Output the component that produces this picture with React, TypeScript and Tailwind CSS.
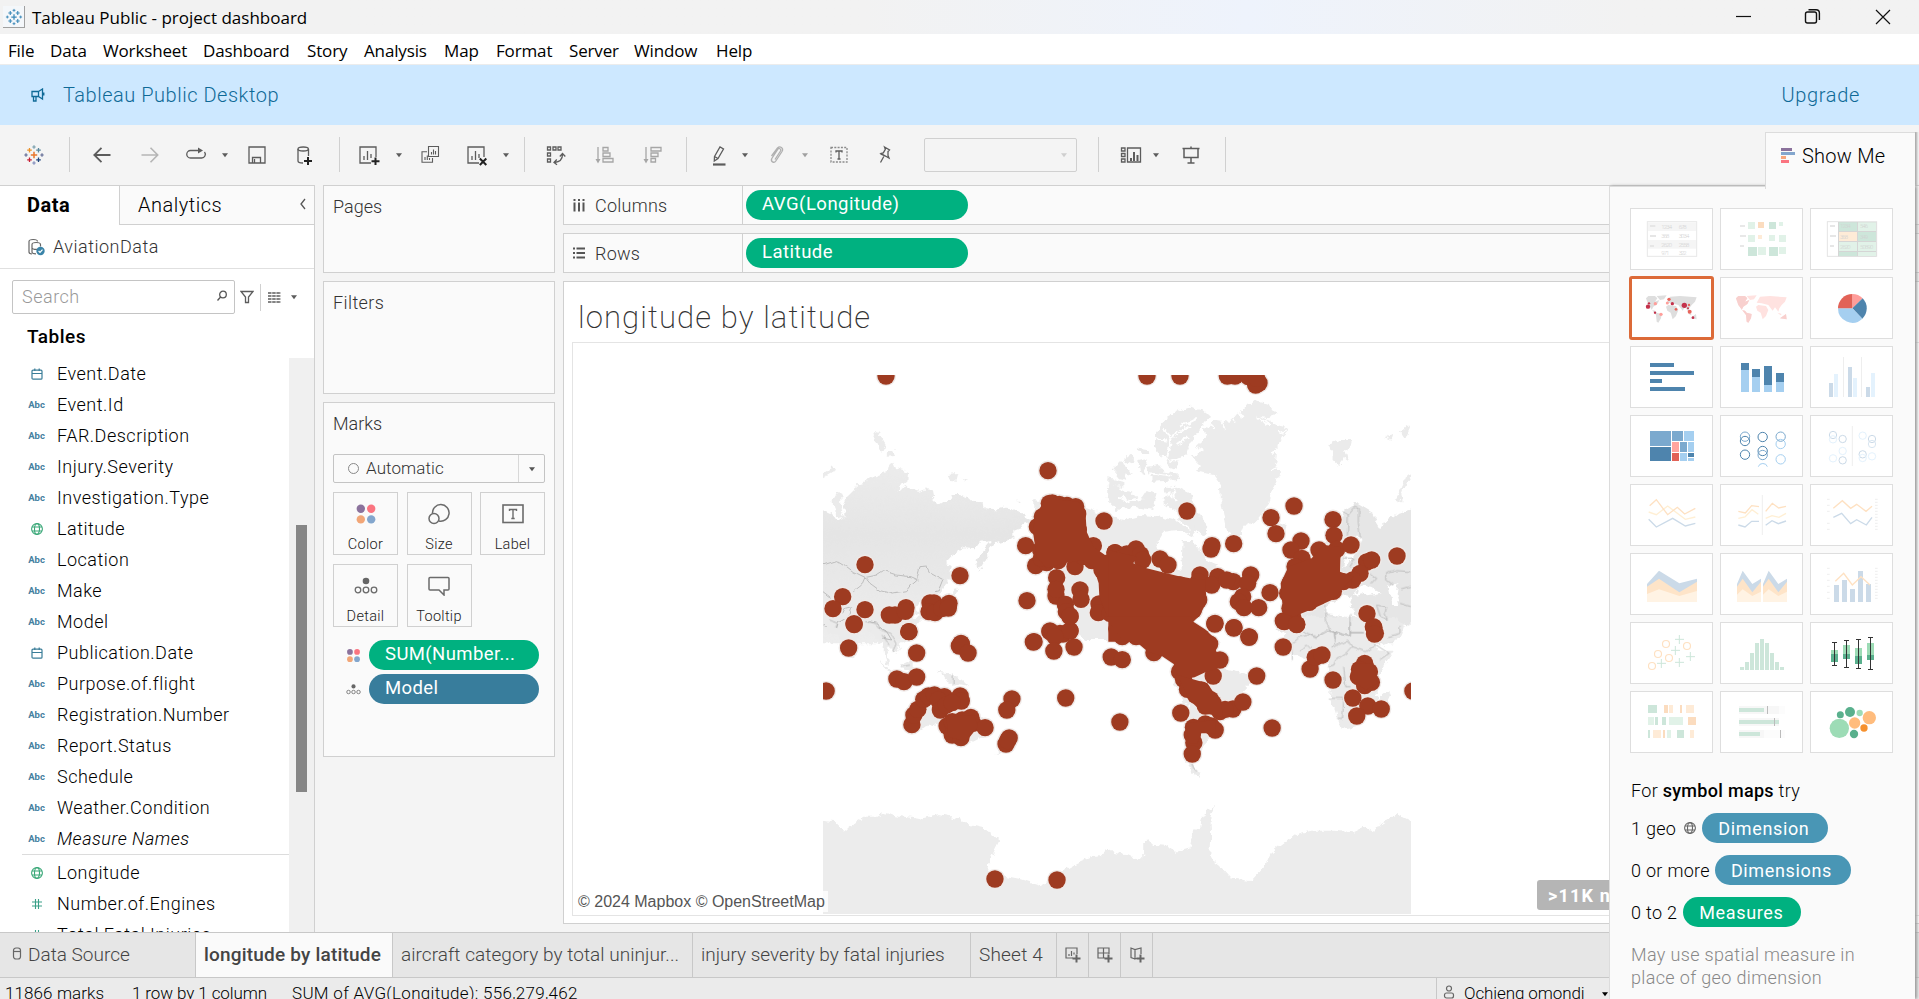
import React from "react";

const UI = "font-['Roboto','Liberation_Sans',sans-serif]";

/* ---------- small shared pieces ---------- */

function Ico({ children, className = "", size = 24 }: { children: React.ReactNode; className?: string; size?: number }) {
  return (
    <svg width={size} height={size} viewBox="0 0 24 24" fill="none" stroke="currentColor" strokeWidth="1.3" className={`shrink-0 ${className}`}>
      {children}
    </svg>
  );
}

function Caret({ className = "" }: { className?: string }) {
  return (
    <svg width="8" height="8" viewBox="0 0 8 8" className={`shrink-0 fill-current ${className}`}>
      <path d="M1 2.300h6L4 6.200z" />
    </svg>
  );
}

function Divider({ className = "" }: { className?: string }) {
  return <div className={`h-[35px] w-px shrink-0 bg-[#d0d0d0] ${className}`} />;
}

function TableauLogo({ mono = false, className = "", size = 24 }: { mono?: boolean; className?: string; size?: number }) {
  const plus = (x: number, y: number, r: number, c: string, w: number) => (
    <path key={`${x}-${y}`} d={`M${x - r} ${y}h${2 * r}M${x} ${y - r}v${2 * r}`} stroke={mono ? "#3a88b8" : c} strokeWidth={w} />
  );
  return (
    <Ico className={className} size={size}>
      {plus(12, 12, 3.2, "#e8762c", 1.5)}
      {plus(7.5, 7.2, 2.3, "#eb9129", 1.3)}
      {plus(16.5, 7.2, 2.3, "#59879b", 1.3)}
      {plus(7.5, 16.8, 2.3, "#c72035", 1.3)}
      {plus(16.5, 16.8, 2.3, "#1f457e", 1.3)}
      {plus(12, 4, 1.7, "#7199a6", 1.1)}
      {plus(12, 20, 1.7, "#7b86b8", 1.1)}
      {plus(4, 12, 1.7, "#5b6591", 1.1)}
      {plus(20, 12, 1.7, "#5b6591", 1.1)}
    </Ico>
  );
}

function Globe({ className = "", size = 14 }: { className?: string; size?: number }) {
  return (
    <svg width={size} height={size} viewBox="0 0 14 14" fill="none" stroke="currentColor" strokeWidth="1.1" className={`shrink-0 ${className}`}>
      <circle cx="7" cy="7" r="5.4" />
      <ellipse cx="7" cy="7" rx="2.5" ry="5.4" />
      <path d="M2 5h10M2 9h10" />
    </svg>
  );
}

function ColorDots({ className = "", size = 22 }: { className?: string; size?: number }) {
  return (
    <svg width={size} height={size} viewBox="0 0 22 22" className={`shrink-0 ${className}`}>
      <circle cx="5.8" cy="5.800" r="4.2" fill="#8b729c" />
      <circle cx="16.2" cy="5.800" r="4.2" fill="#fa7480" />
      <circle cx="5.8" cy="16.400" r="4.2" fill="#f2a677" />
      <circle cx="16.2" cy="16.400" r="4.2" fill="#83a6cd" />
    </svg>
  );
}

function DetailDots({ className = "", size = 24 }: { className?: string; size?: number }) {
  return (
    <svg width={size} height={size} viewBox="0 0 24 24" fill="none" stroke="#6b6b6b" strokeWidth="1.3" className={`shrink-0 ${className}`}>
      <circle cx="12" cy="7" r="3.3" fill="#666" stroke="none" />
      <circle cx="4" cy="16" r="2.8" />
      <circle cx="12" cy="16" r="2.8" />
      <circle cx="20" cy="16" r="2.8" />
    </svg>
  );
}

/* ---------- window chrome ---------- */

function TitleBar() {
  return (
    <div className="flex h-[34px] items-center bg-linear-to-r from-[#f2f2f2] from-45% via-[#eef3fc] via-65% to-[#f2f2f2] to-85% pl-[3px]">
      <div className="flex h-[22px] w-[22px] items-center justify-center border-r border-b border-[#a0a0a0] bg-[#f4f7fa]">
        <TableauLogo mono size={20} />
      </div>
      <div className="mt-[1px] ml-[7px] font-['Open_Sans','Noto_Sans',sans-serif] text-[17px] text-black">Tableau Public - project dashboard</div>
      <svg width="160" height="20" viewBox="0 0 160 20" fill="none" stroke="#111" strokeWidth="1.4" className="mr-[28px] ml-auto">
        <path d="M5 9.5h15" strokeWidth="1.2" />
        <rect x="74.5" y="5" width="11" height="11" rx="2" />
        <path d="M77.5 2.7h7.5a3.4 3.4 0 0 1 3.4 3.4v7" />
        <path d="M145 3l14 14M159 3l-14 14" strokeWidth="1.2" />
      </svg>
    </div>
  );
}

const MENU: [string, string][] = [
  ["File", "w-[42px]"], ["Data", "w-[53px]"], ["Worksheet", "w-[100px]"], ["Dashboard", "w-[104px]"], ["Story", "w-[57px]"],
  ["Analysis", "w-[80px]"], ["Map", "w-[52px]"], ["Format", "w-[73px]"], ["Server", "w-[65px]"], ["Window", "w-[82px]"], ["Help", "w-[50px]"],
];

function MenuBar() {
  return (
    <div className="flex h-[31px] items-center border-b border-[#ececec] bg-white pt-[4px] pl-[8px] font-['Open_Sans','Noto_Sans',sans-serif] text-[17px] tracking-[-0.15px] text-black">
      {MENU.map(([m, w]) => (
        <div key={m} className={`whitespace-nowrap ${w}`}>{m}</div>
      ))}
    </div>
  );
}

function Banner() {
  return (
    <div className="flex h-[60px] items-center bg-[#cde8ff] pr-[59px] pl-[31px] text-[20px] font-light text-[#0f6a97]">
      <svg width="14" height="14" viewBox="0 0 14 14" fill="none" stroke="currentColor" strokeWidth="1.3">
        <path d="M1 3.5h6.5v5H1zM7.5 3.5L11.5 1v10l-4-2.5M2.5 8.5v4.5h2.5V8.500M12.800 4.500v3" />
      </svg>
      <div className="ml-[18px] tracking-[0.52px]">Tableau Public Desktop</div>
      <div className="ml-auto tracking-[0.65px]">Upgrade</div>
    </div>
  );
}

function Toolbar() {
  return (
    <div className="flex h-[60px] items-center bg-[#f4f4f4] pb-[1px] pl-[22px] text-[#5c5c5c]">
      <TableauLogo />
      <Divider className="ml-[23px]" />
      <Ico className="ml-[20px]"><path d="M20.500 12H4.500M11.500 4.800L4.300 12l7.200 7.200" strokeWidth="1.800" /></Ico>
      <Ico className="ml-[24px] text-[#b5b5b5]"><path d="M3.500 12h16M12.500 4.800l7.200 7.200-7.200 7.200" strokeWidth="1.600" /></Ico>
      <Ico className="ml-[22px]"><path d="M15.500 7.500H6.500a3.700 3.700 0 0 0 0 7.500h11a3.700 3.700 0 0 0 3-6" /><path d="M14 4.500l5 3-5 3z" fill="currentColor" stroke="none" /></Ico>
      <Caret className="ml-[13px]" />
      <Ico className="ml-[16px]"><path d="M4 4h16v16H4zM7.500 20v-5.500h8V20M9.500 16v4" /></Ico>
      <Ico className="ml-[24px]"><path d="M5 6v12c0 1.400 2 2 5 2M15.500 6v7" /><ellipse cx="10.200" cy="6" rx="5.200" ry="2" /><path d="M15 14v8M11 18h8" stroke="#222" strokeWidth="2" /></Ico>
      <Divider className="ml-[22px]" />
      <Ico className="ml-[17px]"><path d="M14 20H3V4h16v10M7 13v4M10.500 8v9M14 11v4" /><path d="M18.500 14.500v7.500M14.500 18.300h8" stroke="#222" strokeWidth="2" /></Ico>
      <Caret className="ml-[14px]" />
      <Ico className="ml-[15px]"><path d="M10.500 3.500h10v10h-10zM13.500 9v2.500M15.500 6.500v5M17.500 8v3.500M9 8.800H4v10.500h10.500V15M7 14v3M9.300 12.500v4.500M11.500 15v2" strokeWidth="1.100" /></Ico>
      <Ico className="ml-[23px]"><path d="M14 20H3V4h16v10M7 13v4M10.500 8v9M14 11v4" /><path d="M14.800 15.500l6.500 6.500M21.300 15.500L14.800 22" stroke="#222" strokeWidth="2" /></Ico>
      <Caret className="ml-[13px]" />
      <Divider className="ml-[14px]" />
      <Ico className="ml-[18px]"><path d="M4.500 4h3v3h-3zM10 4h3v3h-3zM15 4h3v3h-3zM4.500 10h3v3h-3zM4.500 16h3v3h-3zM19.500 11.500c0 5-3 7.500-8 8M13.800 16.500l-2.800 3 3 2.300M16.800 13.500l2.700-3 2.800 3" /></Ico>
      <Ico className="ml-[25px] text-[#a6a6a6]"><path d="M6 4v14M11 4.500h5v3.500h-5zM11 10h7v3.500h-7zM11 15.500h10V19H11z" /><path d="M3.500 16h5L6 20.500z" fill="currentColor" stroke="none" /></Ico>
      <Ico className="ml-[24px] text-[#a6a6a6]"><path d="M6 4v14M11 4.500h10V8H11zM11 10h7v3.500h-7zM11 15.500h4.500V19H11z" /><path d="M3.500 16h5L6 20.500z" fill="currentColor" stroke="none" /></Ico>
      <Divider className="ml-[22px]" />
      <Ico className="ml-[20px]"><path d="M7.500 13.500l5.500-9.500 3.500 2-5.500 9.500-3.700 2.500zM7.500 13.500l3.500 2" /><path d="M6 21.500h12.500" strokeWidth="2.200" /></Ico>
      <Caret className="ml-[10px]" />
      <Ico className="ml-[16px] text-[#b0b0b0]"><path d="M10 16.500l5.500-8.500c1-2-1.500-3.500-2.800-1.700L6.800 15.500c-1.500 3 2.200 5.200 4 2.500L17 8.500c2-3.500-2-6-4.500-3.500L6.500 13" /></Ico>
      <Caret className="ml-[12px] text-[#a0a0a0]" />
      <Ico className="ml-[18px]"><rect x="4" y="4.500" width="16" height="14.500" strokeDasharray="2 1.300" stroke="#8a8a8a" /><path d="M9 9.500V8h6v1.500M12 8v8M10.500 16h3" /></Ico>
      <Ico className="ml-[22px]"><path d="M12.500 4l5 3-1.500 1.500v4l1 2.500-8-4.500 2.300-.6 2-3.500zM11.800 13.500l-3.300 6M8.500 11l9 4" transform="translate(-1 0)" /></Ico>
      <div className="ml-[27px] flex h-[34px] w-[153px] items-center justify-end rounded-[2px] border border-[#d0d0d0] pr-[8px] text-[#cfcfcf]"><Caret /></div>
      <Divider className="ml-[21px]" />
      <Ico className="ml-[20px]"><path d="M2.500 5h3.500v3H2.500zM2.500 10.500h3.500v3H2.500zM2.500 16h3.500v3H2.500zM8.500 5h13v14h-13z" /><path d="M12 15v3M15 9v9M18.500 12v6" strokeWidth="2" /></Ico>
      <Caret className="ml-[9px]" />
      <Ico className="ml-[19px]"><path d="M3.500 5.500h17M5 5.500v9h14v-9M12 3.500v2M12 14.500V20M8.500 20h7" strokeWidth="1.500" /></Ico>
      <Divider className="ml-[22px]" />
    </div>
  );
}

/* ---------- data pane ---------- */

type Kind = "date" | "abc" | "geo" | "num";
const FIELDS: [Kind, string][] = [
  ["date", "Event.Date"], ["abc", "Event.Id"], ["abc", "FAR.Description"], ["abc", "Injury.Severity"], ["abc", "Investigation.Type"],
  ["geo", "Latitude"], ["abc", "Location"], ["abc", "Make"], ["abc", "Model"], ["date", "Publication.Date"], ["abc", "Purpose.of.flight"],
  ["abc", "Registration.Number"], ["abc", "Report.Status"], ["abc", "Schedule"], ["abc", "Weather.Condition"], ["abc", "Measure Names"],
];
const MEASURES: [Kind, string][] = [["geo", "Longitude"], ["num", "Number.of.Engines"], ["num", "Total.Fatal.Injuries"]];

function FieldIcon({ kind }: { kind: Kind }) {
  if (kind === "abc") return <span className="text-[9.500px] font-bold text-[#4580a0]">Abc</span>;
  if (kind === "geo") return <Globe className="text-[#3aa878]" />;
  if (kind === "num")
    return (
      <svg width="12" height="12" viewBox="0 0 12 12" stroke="#3aa088" strokeWidth="1.100"><path d="M1 4h10M1 8h10M4.500 1v10M7.500 1v10" /></svg>
    );
  return (
    <svg width="12" height="12" viewBox="0 0 12 12" fill="none" stroke="#3a7d98" strokeWidth="1.200"><rect x="1" y="2.200" width="10" height="9" rx="1" /><path d="M1 5.500h10M3.800 .5v2.500M8.200 .5v2.500" /></svg>
  );
}

function Field({ kind, name }: { kind: Kind; name: string }) {
  return (
    <div className="flex h-[31px] shrink-0 items-center">
      <div className="ml-[24px] flex w-[25px] justify-center leading-none"><FieldIcon kind={kind} /></div>
      <div className={`ml-[8px] text-[18px] font-light tracking-[0.5px] whitespace-nowrap text-black ${name === "Measure Names" ? "italic" : ""}`}>{name}</div>
    </div>
  );
}

function DataPane() {
  return (
    <div className="flex w-[315px] shrink-0 flex-col border-t border-r border-[#d0d0d0] bg-white">
      <div className="flex h-[39px] shrink-0">
        <div className="w-[119px] pt-[4px] pl-[27px] text-[20px] font-bold tracking-[0.5px] text-black">Data</div>
        <div className="flex flex-1 items-start border-b border-l border-[#d0d0d0] bg-[#fafafa] pt-[4px] pl-[18px] text-[20px] font-light tracking-[0.5px] text-black">
          Analytics
          <svg width="8" height="12" viewBox="0 0 8 12" fill="none" stroke="#555" strokeWidth="1.300" className="mt-[8px] mr-[7px] ml-auto"><path d="M6 1L2 6l4 5" /></svg>
        </div>
      </div>
      <div className="flex h-[44px] shrink-0 items-center border-b border-[#e0e0e0] pl-[27px] text-[18px] font-light text-[#333]">
        <svg width="19" height="18" viewBox="0 0 19 18" fill="none" stroke="#666" strokeWidth="1.200">
          <path d="M5 16c-2.500 0-3-1-3-2V3.500C2 .800 10.500 .800 10.500 3.500M5 6.500c0-2.700 8.500-2.700 8.500 0v2M5 6.500v7.500c0 1.300 2 1.800 4 1.800M5 10c1 1.500 4 1.600 5 1.200" />
          <circle cx="13.500" cy="13" r="4.200" fill="#3a84a8" stroke="none" /><path d="M11.600 13l1.400 1.400 2.500-2.800" stroke="#fff" />
        </svg>
        <div className="ml-[7px] tracking-[0.5px]">AviationData</div>
      </div>
      <div className="mt-[11px] flex h-[34px] shrink-0 items-center pl-[12px] text-[#5c5c5c]">
        <div className="flex h-[34px] w-[223px] items-center justify-between rounded-[2px] border border-[#c4c4c4] pr-[6px] pb-[2px] pl-[9px] text-[18px] font-light tracking-[0.5px] text-[#999]">
          Search
          <svg width="12" height="12" viewBox="0 0 12 12" fill="none" stroke="#555" strokeWidth="1.300"><circle cx="7" cy="4.500" r="3.300" /><path d="M4.600 7L1.500 10.500" /></svg>
        </div>
        <svg width="14" height="14" viewBox="0 0 14 14" fill="none" stroke="currentColor" strokeWidth="1.300" className="ml-[5px]"><path d="M1 1.500h12L8.500 7v5.500h-3V7z" /></svg>
        <div className="ml-[6px] h-[27px] w-px bg-[#d0d0d0]" />
        <svg width="13" height="11" viewBox="0 0 13 11" stroke="currentColor" strokeWidth="1.600" className="ml-[7px]"><path d="M0 1h13M0 4h13M0 7h13M0 10h13" strokeDasharray="3.500 .700" /></svg>
        <Caret className="ml-[9px]" />
      </div>
      <div className="h-[44px] shrink-0 pt-[9px] pl-[27px] text-[19px] font-medium tracking-[0.5px] text-black">Tables</div>
      <div className="flex min-h-0 flex-1">
        <div className="flex w-[289px] shrink-0 flex-col overflow-hidden">
          {FIELDS.map(([k, n]) => <Field key={n} kind={k} name={n} />)}
          <div className="ml-[22px] h-px shrink-0 bg-[#dcdcdc]" />
          <div className="mt-[2px] flex flex-col">{MEASURES.map(([k, n]) => <Field key={n} kind={k} name={n} />)}</div>
        </div>
        <div className="flex-1 bg-[#f0f0f0] pt-[167px] pl-[7px]"><div className="h-[267px] w-[11px] bg-[#868686]" /></div>
      </div>
    </div>
  );
}

/* ---------- cards ---------- */

function MarkButton({ label, children }: { label: string; children: React.ReactNode }) {
  return (
    <div className="flex h-[63px] w-[65px] flex-col items-center border border-[#d0d0d0] bg-[#fafafa]">
      <div className="flex h-[42px] items-center justify-center">{children}</div>
      <div className="text-[14.500px] leading-[19px] tracking-[0.3px] text-[#222]">{label}</div>
    </div>
  );
}

function Cards() {
  const card = "shrink-0 border border-[#d0d0d0] bg-[#fafafa] pl-[9px] text-[18px] font-light text-[#333]";
  return (
    <div className="ml-[8px] flex w-[232px] shrink-0 flex-col gap-[8px]">
      <div className={`h-[88px] pt-[7px] ${card}`}>Pages</div>
      <div className={`h-[113px] pt-[7px] tracking-[0.4px] ${card}`}>Filters</div>
      <div className={`h-[355px] pt-[7px] ${card}`}>
        Marks
        <div className="mt-[17px] flex h-[29px] w-[212px] items-center rounded-[2px] border border-[#c4c4c4] text-[17px]">
          <div className="ml-[14px] h-[11px] w-[11px] rounded-full border border-[#888]" />
          <div className="ml-[7px] tracking-[0.1px]">Automatic</div>
          <div className="ml-auto flex h-full w-[26px] items-center justify-center border-l border-[#d8d8d8] text-[#555]"><Caret /></div>
        </div>
        <div className="mt-[9px] grid w-[212px] grid-cols-[65px_65px_65px] gap-x-[8.500px] gap-y-[9px]">
          <MarkButton label="Color"><ColorDots /></MarkButton>
          <MarkButton label="Size">
            <svg width="24" height="22" viewBox="0 0 24 22" fill="none" stroke="#6b6b6b" strokeWidth="1.500"><path d="M5.500 10.500a8.300 8.300 0 1 1 6.500 7.500" /><circle cx="7" cy="15.500" r="5" /></svg>
          </MarkButton>
          <MarkButton label="Label">
            <svg width="22" height="20" viewBox="0 0 22 20" fill="none" stroke="#6b6b6b" strokeWidth="1.600"><rect x="1" y="1" width="20" height="17.500" /><path d="M7.500 7V5.500h7V7M11 5.500v9M9.300 14.500h3.400" strokeWidth="1.400" /></svg>
          </MarkButton>
          <MarkButton label="Detail"><DetailDots /></MarkButton>
          <MarkButton label="Tooltip">
            <svg width="22" height="20" viewBox="0 0 22 20" fill="none" stroke="#6b6b6b" strokeWidth="1.500"><path d="M2 1.500h18q1 0 1 1v10.500q0 1-1 1h-4V19l-5-5H2q-1 0-1-1V2.500q0-1 1-1z" /></svg>
          </MarkButton>
        </div>
        <div className="mt-[13px] flex flex-col gap-[4px] text-[18.500px] font-normal tracking-[0.4px] text-white">
          <div className="flex h-[30px] items-center">
            <ColorDots size={15} className="ml-[13px]" />
            <div className="ml-[8px] flex h-[30px] w-[170px] items-center rounded-full bg-[#00b180] pl-[16px]">SUM(Number...</div>
          </div>
          <div className="flex h-[30px] items-center">
            <DetailDots size={15} className="ml-[13px]" />
            <div className="ml-[8px] flex h-[30px] w-[170px] items-center rounded-full bg-[#387d9c] pl-[16px]">Model</div>
          </div>
        </div>
      </div>
    </div>
  );
}

function Shelf({ label, pill, children }: { label: string; pill: string; children: React.ReactNode }) {
  return (
    <div className="flex h-[40px] shrink-0 items-center border-y border-l border-[#d0d0d0] bg-[#fafafa]">
      <svg width="12" height="13" viewBox="0 0 12 13" stroke="#555" strokeWidth="2" className="ml-[9px]">{children}</svg>
      <div className="ml-[10px] w-[147px] text-[18px] font-light tracking-[0.25px] text-[#333]">{label}</div>
      <div className="h-full w-px bg-[#d0d0d0]" />
      <div className="ml-[3px] flex h-[30px] w-[222px] items-center rounded-full bg-[#00b180] pl-[16px] text-[18.500px] tracking-[0.500px] text-white">{pill}</div>
    </div>
  );
}

/* ---------- map ---------- */

type P = [number, number];
type Tile = { x: number; y: number; sx: number; sy: number };
const NW: Tile = { x: 800, y: 350, sx: 1 / 3, sy: 1 / 3 };
const NE: Tile = { x: 1110, y: 350, sx: 1 / 3, sy: 1 / 3 };
const SO: Tile = { x: 800, y: 620, sx: 1 / 2.529, sy: 1 / 3 };

const place = (t: Tile, pts: P[]): P[] => pts.map(([x, y]) => [t.x + x * t.sx, t.y + y * t.sy]);
const matrix = (t: Tile) => `matrix(${t.sx} 0 0 ${t.sy} ${t.x} ${t.y})`;

const DOTS: P[] = [
  ...place(NW, [
    [258, 78], [744, 362], [912, 513], [195, 644], [480, 677], [128, 740], [99, 776], [195, 779], [162, 821], [268, 795], [285, 795], [318, 773], [316, 784],
    [327, 845], [390, 759], [402, 759], [387, 785], [405, 788], [425, 776], [447, 760], [445, 774], [677, 587], [707, 647], [825, 650], [770, 683], [768, 738],
    [768, 718], [796, 763], [799, 785], [810, 800], [840, 720], [843, 748], [681, 752], [897, 762], [895, 788], [750, 843], [810, 843], [780, 850], [700, 876],
    [483, 880], [748, 460], [757, 459], [778, 463], [800, 466], [827, 470], [833, 492], [727, 500], [712, 530], [835, 540], [722, 600], [740, 638], [724, 625], [775, 632],
    [880, 587], [850, 620], [876, 632], [906, 660], [945, 608], [730, 570], [905, 640], [951, 838], [930, 790],
  ]),
  ...place(NE, [
    [15, 608], [50, 612], [78, 597], [92, 614], [98, 630], [150, 627], [174, 645], [210, 705], [270, 675], [265, 695], [323, 680], [305, 705], [266, 750], [250, 780],
    [370, 695], [350, 690], [422, 675], [413, 700], [398, 740], [385, 755], [402, 773], [446, 773], [480, 728], [315, 820], [372, 833], [418, 861], [303, 597], [306, 587],
    [371, 581], [231, 483], [483, 503], [498, 551], [552, 468], [111, 78], [210, 78], [352, 78], [375, 78], [447, 99], [437, 105], [415, 80], [440, 85], [669, 509],
    [672, 556], [573, 573], [543, 600], [576, 625], [555, 650], [627, 600], [680, 598], [665, 620], [723, 585], [770, 636], [785, 630], [750, 670], [728, 690], [700, 695],
    [861, 618], [771, 791], [792, 833], [796, 850], [540, 700], [533, 730], [540, 775], [520, 813], [548, 800], [560, 823], [598, 757], [650, 725], [670, 724],
  ]),
  ...place(SO, [
    [123, 84], [137, 14], [275, 35], [295, 99], [403, 78], [408, 72], [425, 99], [245, 177], [263, 185], [295, 171], [66, 213], [283, 314], [288, 285], [298, 268],
    [313, 238], [325, 228], [340, 225], [365, 230], [350, 240], [355, 270], [370, 255], [405, 228], [408, 243], [385, 248], [372, 318], [385, 305], [410, 300], [432, 292],
    [437, 310], [385, 345], [407, 353], [410, 330], [468, 323], [536, 237], [523, 270], [529, 354], [521, 372], [525, 362], [672, 234], [809, 306], [592, 65], [632, 35], [665, 42],
    [683, 32], [645, 50], [642, 93], [693, 81], [787, 111], [815, 119], [683, -12], [802, 25], [815, 50], [895, 98], [850, 50], [960, 155], [970, 178], [980, 208],
    [1000, 225], [1015, 210], [1038, 238], [1045, 250], [1025, 258], [1062, 275], [1062, 120], [1045, 168], [1036, 72], [1015, 52], [1095, 267], [1120, 246], [1075, 268],
    [1155, 168], [963, 279], [995, 322], [1025, 312], [1040, 318], [1050, 330], [992, 345], [996, 368], [992, 402], [1194, 324], [1049, 12], [1097, 24], [1135, 51], [1222, 81],
    [1348, 180], [1290, 147], [1303, 112], [1320, 105], [1398, 234], [1436, 258], [1408, 288], [1470, 267], [1550, 213], [1225, 5], [1256, 14], [1450, 20], [1453, 42],
    [1428, 130], [1415, 148], [1440, 155], [1412, 170], [1445, 187], [1428, 197], [1428, 172], [493, 777], [650, 780],
  ]),
];

const CLUSTERS: P[][] = [
  place(NW, [[738, 445], [835, 455], [856, 480], [860, 545], [880, 590], [915, 615], [990, 590], [990, 870], [950, 870], [898, 740], [896, 700], [880, 650], [850, 630], [790, 640], [740, 655], [710, 620], [698, 540], [710, 490]]),
  place(NE, [[-5, 600], [80, 620], [70, 640], [110, 655], [200, 677], [240, 685], [285, 690], [290, 755], [270, 795], [250, 815], [285, 838], [325, 875], [-5, 875]]),
  place(NE, [[535, 650], [605, 625], [640, 585], [692, 590], [690, 665], [730, 680], [670, 748], [600, 780], [550, 800], [520, 790], [515, 740], [512, 700]]),
  place(SO, [[770, -10], [990, -10], [998, 20], [1035, 45], [1055, 100], [1070, 140], [1025, 157], [998, 172], [960, 180], [945, 132], [915, 108], [880, 95], [850, 65], [815, 60], [790, 20]]),
  place(SO, [[955, 165], [1030, 190], [1065, 250], [1070, 290], [1020, 280], [985, 240]]),
  place(SO, [[975, 310], [1050, 300], [1050, 340], [1015, 340], [1005, 370], [985, 370]]),
  place(SO, [[1400, 130], [1450, 130], [1460, 190], [1430, 210], [1395, 175]]),
  place(SO, [[370, 290], [440, 285], [450, 320], [420, 365], [375, 350]]),
];
const poly = (p: P[]) => p.map((q) => q.join(",")).join(" ");

function WorldMap() {
  return (
    <svg width="588" height="539" viewBox="823 375 588 539" className="block">
      <defs>
        <filter id="coast" x="-5%" y="-5%" width="110%" height="110%">
          <feTurbulence type="fractalNoise" baseFrequency="0.16" numOctaves="3" seed="4" />
          <feDisplacementMap in="SourceGraphic" scale="7" xChannelSelector="R" yChannelSelector="G" />
        </filter>
        <filter id="border" x="-5%" y="-5%" width="110%" height="110%">
          <feTurbulence type="fractalNoise" baseFrequency="0.12" numOctaves="2" seed="9" />
          <feDisplacementMap in="SourceGraphic" scale="4" xChannelSelector="R" yChannelSelector="G" />
        </filter>
        <linearGradient id="land" x1="0" y1="0" x2="0" y2="1">
          <stop offset="0" stopColor="#ececec" /><stop offset=".4" stopColor="#e5e5e5" /><stop offset="1" stopColor="#ededed" />
        </linearGradient>
      </defs>
      <g filter="url(#coast)" fill="#ebebeb">
        <g transform={matrix(NW)}>
          <path fill="url(#land)" d="M40 470L69 478 95 490 110 512 122 515 134 495 128 470 140 445 150 435 165 420 168 403 190 400 215 382 245 370 265 365 270 345 280 338 285 350 310 357 325 370 322 395 300 410 292 424 320 408 330 420 360 425 380 418 395 420 400 445 415 460 430 450 452 450 458 432 480 432 500 440 520 458 548 460 552 475 590 478 610 473 640 475 665 490 685 505 700 520 700 535 675 515 665 530 640 540 640 562 610 575 575 585 565 610 550 640 535 665 530 630 548 600 575 570 540 575 525 598 490 595 460 612 435 640 455 645 450 680 425 725 410 735 380 740 355 760 345 775 370 800 340 790 320 800 330 850 310 880 40 880z" />
          <path d="M40 378L69 370 100 352 105 360 69 382 40 395zM98 450L112 425 125 432 122 480 135 500 118 505 100 480zM220 262L235 240 245 265 260 290 240 305zM262 305L280 300 285 318 260 320zM440 375L475 372 470 392 450 390zM488 383L505 390 495 392zM920 403L960 410 950 440 925 450zM935 355L960 345 985 390 960 385zM645 452L660 452 655 458z" />
          <path d="M440 735L470 715 480 722 450 745z" />
        </g>
        <g transform={matrix(NE)}>
          <path d="M-230 450L-70 475 0 500 40 510 100 495 150 500 190 510 225 490 250 510 262 530 250 560 205 540 160 545 140 580 150 620 200 650 215 660 215 630 218 570 245 570 270 600 290 630 325 645 290 670 250 690 250 760 240 870-80 870-150 700-230 640z" />
          <path d="M135 250L160 210 210 180 240 170 275 178 300 200 270 240 240 280 225 320 180 330 150 315 135 290zM165 415L200 410 240 430 250 460 270 500 295 530 285 560 250 530 230 500 190 480 160 460zM-5 400L30 420 60 425 90 450 110 420 140 430 130 480 70 470 20 480-10 450zM10 350L60 310 75 330 50 345 65 375 20 365zM85 330L110 325 105 375 90 370zM110 350L150 345 160 365 200 370 205 390 130 395zM80 295L110 300 115 315 95 315zM165 330L205 335 200 360 175 350zM-5 385L40 395 40 410-5 405z" />
          <path d="M158 235L185 262 240 225M185 262L172 320M140 268L172 272M200 285L235 262M150 440L180 430 205 455M190 415L195 440M30 440L60 455 100 445M60 425L80 400 120 420M120 370L185 380M30 330L60 350M-20 508L20 485M190 500L240 540M210 230L260 205" fill="none" stroke="#fff" strokeWidth="6" />
          <path fill="#ececec" d="M245 320L280 300 258 290 290 260 280 240 320 210 360 215 380 190 405 175 430 150 475 158 500 190 480 205 445 200 500 225 540 235 515 260 500 290 495 330 510 370 490 410 478 460 440 510 400 530 390 555 360 555 345 520 335 460 328 400 310 375 255 362 270 345z" />
          <path d="M310 235L300 215M345 240L335 212M375 215L360 185M395 205L385 185M480 225L440 205M505 250L530 240M505 300L485 310M510 350L485 360M340 440L325 450" fill="none" stroke="#fff" strokeWidth="5" />
          <path d="M655 285L690 270 730 270 725 290 705 300 715 335 700 325 680 350 670 320zM930 360L903 370 885 385 865 430 857 445 878 455 873 430 903 385 930 370zM825 258L850 252 845 266zM870 245L890 225 900 235 885 268zM510 520L530 525 525 540 505 538z" />
          <path fill="#e6e6e6" d="M640 590L655 560 690 520 700 485 740 460 790 490 800 510 830 515 860 492 903 478 930 475 930 820 900 820 880 835 850 880 560 880 500 840 520 760 530 690 545 650 600 620z" />
          <path fill="#ffffff" d="M700 650L708 615 735 585 738 560 755 562 745 590 730 615 705 655zM640 775L665 755 700 735 730 740 722 770 745 805 720 805 670 792 645 790zM735 735L745 705 780 710 815 730 780 738 755 730zM835 705L865 700 860 735 868 765 845 765 840 730zM760 800L775 800 800 880 788 880zM870 822L903 828 890 838 876 834zM795 510L810 535 825 518 815 505z" />
        </g>
        <g transform={matrix(SO)}>
          <path d="M30-10L310-10 270 50 245 60 252 90 240 100 225 85 218 100 228 135 220 130 210 100 208 65 185 45 165 20 145 45 140 110 125 115 105 60 90 40 75 38 70 25 30 10z" />
          <path d="M200 120L238 160 230 162 205 130zM255 135L285 118 285 150 262 150zM345 155L380 160 410 180 425 198 395 190 375 192 365 170zM300 235L330 205 380 220 400 210 430 270 470 300 480 340 430 370 380 350 345 310 310 325 280 330 275 290zM530 330L548 345 520 390 492 405 500 390z" />
          <path d="M950 150L1000 170 1060 145 1085 150 1140 165 1140 190 1120 215 1110 250 1070 290 1050 330 1030 365 1005 400 995 430 1015 472 990 460 975 410 975 330 985 270 950 200z" />
          <path d="M1220-10L1225 60 1245 100 1275 115 1335 105 1335 150 1345 180 1340 230 1355 270 1370 327 1410 318 1440 280 1460 235 1455 190 1480 130 1500 95 1470 95 1450 60 1430 10 1445 10 1475 75 1520 55 1530 15 1500-10zM1465 230L1490 210 1495 225 1480 265 1465 260z" />
          <path fill="#ececec" d="M20 600L58 603 90 607 112 633 160 590 200 590 205 577 240 585 300 597 350 585 400 597 430 615 465 625 505 660 480 720 475 760 520 768 560 778 615 797 650 770 675 745 700 728 740 708 765 705 770 688 800 697 835 705 845 720 868 718 868 668 890 663 895 675 925 677 950 695 985 683 990 655 995 625 1012 628 1015 600 1030 570 1050 555 1038 590 1040 660 1037 715 1060 735 1090 775 1140 783 1175 740 1190 700 1210 680 1250 645 1290 632 1350 632 1400 637 1430 620 1455 635 1470 612 1510 582 1545 603 1580 603 1580 920 20 920z" />
        </g>
      </g>
      <g fill="none" stroke="#b4b4b4" filter="url(#border)">
        <g transform={matrix(NW)} strokeWidth="2.500">
          <path d="M69 645L110 632 140 650 160 665 195 682 230 675 250 662 290 675 330 680 352 690 335 705 320 725 280 732 240 722 210 700 195 682 185 705 160 725M350 685L360 650 380 648 392 670 428 690 415 722 405 725M69 725L95 745M110 835L115 815 150 795 155 770 135 775 128 790M205 815L235 820 240 835 260 845 275 870 250 865M69 820L80 830" />
        </g>
        <g transform={matrix(NE)} strokeWidth="2.500">
          <path d="M697 485L715 495 735 472 745 475 745 520 752 565M715 495L712 560M700 625L735 625 720 650M780 675L797 685 785 700M830 690L830 670 860 662 903 665M830 690L850 705M875 720L903 712M720 795V860M720 848H762M645 765L650 820 660 840M570 840L620 862 655 842 718 860M675 842V870M800 765L830 770 825 790 832 808 810 800 800 765M835 860L870 850 870 828M870 760L903 770" />
        </g>
        <g transform={matrix(SO)} strokeWidth="2.200">
          <path d="M165 5L190 10 205 30 230 40 245 70 235 95M75 0L95 10 90 25M210 45L225 75M255 140L280 135M387 160V190M1245 70L1265 50 1290 45 1305 55 1330 30 1350 35 1392 48V5M1350 35L1355 70 1345 85 1385 60 1395 80 1380 100 1355 120 1350 135 1335 140M1395 80L1430 95 1455 75M1245 70V120M1265 95L1280 75 1300 100M1375 140L1380 200H1392M1340 235H1375M1375 235L1372 295 1358 295M1392 38H1425M1450 70L1490 100 1465 120M990 430L1000 455" />
        </g>
      </g>
      <g fill="#efe6e3" stroke="#efe9e7" strokeWidth="2">
        {DOTS.map(([x, y], i) => <circle key={i} cx={x} cy={y} r="9.100" />)}
        {CLUSTERS.map((c, i) => <polygon key={i} points={poly(c)} />)}
      </g>
      <g fill="#9e3b21">
        {DOTS.map(([x, y], i) => <circle key={i} cx={x} cy={y} r="8.700" />)}
        {CLUSTERS.map((c, i) => <polygon key={i} points={poly(c)} />)}
      </g>
    </svg>
  );
}

function Workspace() {
  return (
    <div className="ml-[8px] flex min-w-0 flex-1 flex-col gap-[8px] overflow-hidden">
      <Shelf label="Columns" pill="AVG(Longitude)"><path d="M1.500 3.500v9M6 3.500v9M10.500 3.500v9M1.500 0v2M6 0v2M10.500 0v2" /></Shelf>
      <Shelf label="Rows" pill="Latitude"><path d="M3.500 1.500H12M3.500 6H12M3.500 10.500H12M0 1.500h2M0 6h2M0 10.500h2" /></Shelf>
      <div className="flex h-[643px] shrink-0 flex-col border-y border-l border-[#d0d0d0] bg-white pl-[8px]">
        <div className="h-[60px] pt-[14px] pl-[6px] text-[31px] leading-[44px] font-extralight tracking-[1.1px] text-[#333]">longitude by latitude</div>
        <div className="relative h-[574px] w-full border-y border-l border-[#e4e4e4]">
          <div className="mt-[32px] ml-[250px]"><WorldMap /></div>
          <div className="absolute bottom-[3px] left-[2px] bg-white/80 pr-[3px] pl-[3px] font-['Liberation_Sans',Arial,sans-serif] text-[16px] leading-[21px] whitespace-nowrap text-[#555]">© 2024 Mapbox © OpenStreetMap</div>
          <div className="absolute bottom-[5px] left-[964px] h-[30px] w-[120px] rounded-[3px] bg-[#b5b5b5] pl-[11px] text-[18px] leading-[31px] font-bold tracking-[1.2px] whitespace-nowrap text-white">&gt;11K nulls</div>
        </div>
      </div>
    </div>
  );
}

/* ---------- show me ---------- */

const rects = (list: [number, number, number, number, string][]) =>
  list.map(([x, y, w, h, f], i) => <rect key={i} x={x} y={y} width={w} height={h} fill={f} />);
const rings = (list: [number, number, string][], r: number, sw = 3) =>
  list.map(([x, y, c], i) => <circle key={i} cx={x} cy={y} r={r} fill="none" stroke={c} strokeWidth={sw} />);

const LANDS = "M138 325L145 318 165 318 172 325 165 335 178 330 172 342 160 350 155 360 165 362 170 368 185 372 183 385 175 398 170 395 168 375 158 362 145 345zM170 318L200 316 192 328 180 330zM205 345L198 350 202 362 212 368 218 388 228 378 235 360 228 348zM200 338L210 320 240 318 290 322 285 335 275 345 268 355 265 365 255 352 248 362 235 345 215 340zM270 385L288 372 290 388zM262 368L275 372 272 376z";

const DB = "#4e84ad";
const LB = "#a5cff0";
const num = (x: number, y: number, t: string) => <text key={`${x}-${y}`} x={x} y={y} fontSize="18" fontWeight="300" fill="#d2d2d2" textLength={t.length * 8}>{t}</text>;
const ticks = (x: number) => <path d={[...Array(11)].map((_, i) => `M${x} ${58 + i * 9}h8`).join("")} stroke="#eee" strokeWidth="3" />;

const THUMBS: { box: string; on?: boolean; art: React.ReactNode }[] = [
  { box: "90 54 249 186", art: <><rect x="142" y="95" width="148" height="104" fill="#fff" stroke="#e8e8e8" strokeWidth="3" />{rects([[144, 97, 144, 26, "#f5f5f5"], [144, 150, 144, 26, "#f5f5f5"], [150, 105, 16, 6, "#e6e6e6"], [150, 135, 18, 6, "#e6e6e6"], [150, 165, 12, 6, "#e6e6e6"]])}{num(184, 116, "1234")}{num(236, 116, "678")}{num(184, 143, "368")}{num(236, 143, "3034")}{num(184, 170, "2620")}{num(236, 170, "2558")}{num(184, 194, "971")}{num(236, 194, "322")}</> },
  { box: "360 54 249 186", art: rects([[420, 105, 15, 6, "#e8e8e8"], [420, 135, 18, 6, "#e8e8e8"], [420, 165, 12, 6, "#e8e8e8"], [444, 96, 21, 21, "#e1f2e8"], [474, 96, 18, 18, "#fbdcbf"], [507, 96, 21, 21, "#cde6da"], [537, 96, 12, 12, "#e1f2e8"], [444, 135, 21, 21, "#e1f2e8"], [474, 135, 12, 12, "#feebd7"], [507, 135, 18, 18, "#e1f2e8"], [537, 135, 21, 21, "#e1f2e8"], [444, 171, 27, 27, "#cde6da"], [474, 171, 24, 24, "#e1f2e8"], [507, 171, 27, 27, "#cde6da"], [537, 171, 21, 21, "#e1f2e8"]]) },
  { box: "630 54 249 186", art: <><rect x="682" y="95" width="148" height="104" fill="#fff" stroke="#e4e4e4" strokeWidth="3" />{rects([[714, 96, 115, 103, "#d5d5d5"], [717, 97, 54, 26, "#cde6da"], [774, 97, 54, 26, "#e1f2e8"], [717, 126, 54, 27, "#feebd7"], [774, 126, 54, 27, "#cde6da"], [717, 156, 54, 27, "#e1f2e8"], [774, 156, 54, 27, "#e1f2e8"], [717, 186, 54, 12, "#cde6da"], [774, 186, 54, 12, "#e1f2e8"], [690, 105, 15, 6, "#e6e6e6"], [690, 135, 18, 6, "#e6e6e6"], [690, 165, 12, 6, "#e6e6e6"]])}{num(720, 114, "1234")}{num(780, 114, "546")}{num(720, 146, "368")}{num(780, 146, "349")}{num(720, 176, "2620")}{num(780, 176, "50890")}</> },
  { box: "90 261 249 186", on: true, art: <><path d={LANDS} fill="#dedede" />{([[144, 350, 6.500, "#c4314b"], [147, 340, 3.500, "#c4314b"], [166, 341, 5, "#ff9e9a"], [165, 368, 3.500, "#c4314b"], [183, 373, 5, "#ff9e9a"], [207, 328, 5, "#e8645c"], [202, 339, 4.500, "#ff9e9a"], [217, 341, 5, "#c4314b"], [228, 358, 4, "#e8645c"], [253, 346, 8, "#c4314b"], [267, 345, 3.500, "#e8645c"], [264, 355, 3, "#c4314b"], [269, 365, 6, "#e8645c"], [279, 383, 4, "#c4314b"]] as [number, number, number, string][]).map(([x, y, r, c], i) => <circle key={i} cx={x} cy={y} r={r} fill={c} />)}</> },
  { box: "360 261 249 186", art: <><path transform="translate(270 0)" d={LANDS} fill="#ffe2e0" /><path transform="translate(270 0)" d="M138 325L145 318 165 318 172 325 165 335 178 330 172 342 160 350 155 360 165 362 170 368 185 372 183 385 175 398 170 395 168 375 158 362 145 345zM270 385L288 372 290 388z" fill="#f8d0ce" /></> },
  { box: "630 261 249 186", art: <><path d="M757 355V312A43 43 0 0 1 788 325z" fill="#ff9d9a" /><path d="M757 355L788 325A43 43 0 0 1 787 386z" fill={DB} /><path d="M757 355L787 386A43 43 0 0 1 714 355z" fill={LB} /><path d="M757 355H714A43 43 0 0 1 757 312z" fill="#e26257" /></> },
  { box: "90 468 249 186", art: rects([[150, 519, 72, 12, DB], [150, 543, 132, 12, DB], [150, 567, 36, 12, DB], [150, 591, 105, 12, DB]]) },
  { box: "360 468 249 186", art: rects([[423, 519, 24, 21, DB], [423, 540, 24, 66, LB], [456, 537, 24, 24, DB], [456, 561, 24, 45, LB], [492, 528, 24, 57, DB], [492, 585, 24, 21, LB], [528, 549, 24, 27, DB], [528, 576, 24, 30, LB]]) },
  { box: "630 468 249 186", art: rects([[687, 579, 12, 42, "#cbdae8"], [702, 552, 12, 69, "#e4f2fd"], [729, 501, 3, 120, "#eee"], [744, 531, 12, 90, "#cbdae8"], [759, 564, 12, 57, "#e4f2fd"], [783, 501, 3, 120, "#eee"], [798, 591, 12, 30, "#cbdae8"], [813, 549, 12, 72, "#e4f2fd"]]) },
  { box: "90 675 249 186", art: rects([[150, 723, 63, 45, "#7ba9ce"], [150, 771, 63, 42, DB], [216, 723, 33, 30, "#7ba9ce"], [252, 723, 30, 30, LB], [216, 756, 21, 30, "#ffa49e"], [240, 756, 21, 30, "#7ba9ce"], [264, 756, 18, 30, LB], [216, 789, 21, 24, "#e26257"], [240, 789, 21, 24, LB], [264, 789, 18, 12, DB], [264, 804, 18, 9, LB]]) },
  { box: "360 675 249 186", art: <>{rings([[435, 740, "#7ba9ce"], [435, 753, DB], [435, 794, DB], [488, 741, DB], [488, 783, DB], [488, 795, "#7ba9ce"], [542, 762, LB], [542, 740, "#7ba9ce"], [542, 808, LB]], 14)}<path d="M475 830a14 13 0 0 1 27 0" fill="none" stroke={LB} strokeWidth="3" /></> },
  { box: "630 675 249 186", art: <>{rings([[699, 735, "#cbdae8"], [699, 748, "#e4f2fd"], [728, 747, "#cbdae8"], [728, 783, "#e4f2fd"], [699, 805, "#e4f2fd"], [728, 811, "#cbdae8"], [788, 737, "#e4f2fd"], [816, 747, "#cbdae8"], [816, 762, "#d9e6f1"], [788, 793, "#cbdae8"], [788, 804, "#e4f2fd"], [816, 799, "#e4f2fd"]], 11)}<path d="M757 708v120" stroke="#eee" strokeWidth="3" /></> },
  { box: "90 12 249 186", art: <g fill="none" strokeWidth="4"><path d="M146 96L169 104 203 78 256 118 286 111" stroke="#ffefd4" /><path d="M149 77L169 59 203 104 232 82 254 102 286 85" stroke="#fee1c2" /><path d="M146 118L169 141 218 115 256 138 286 130" stroke="#cbdae8" /></g> },
  { box: "360 12 249 186", art: <g fill="none" strokeWidth="4"><path d="M415 115L435 111 456 89 475 103M497 115L516 107 537 112 558 100" stroke="#ffefd4" /><path d="M415 94L436 99 455 77 477 80M497 94L517 70 536 84 558 79" stroke="#fee1c2" /><path d="M415 135L435 141 455 124 477 124M497 136L516 122 535 131 558 123" stroke="#cbdae8" /><path d="M487 45v120" stroke="#eee" strokeWidth="3" /></g> },
  { box: "630 12 249 186", art: <g fill="none" strokeWidth="4"><path d="M700 85L727 62 752 85 770 73 798 94 816 79" stroke="#fee1c2" /><path d="M700 112L725 100 752 131 770 119 799 135 816 112" stroke="#cbdae8" />{ticks(825)}<path d="M681 58h8M681 76h8M681 94h8M681 130h8M681 148h8" stroke="#eee" strokeWidth="3" /></g> },
  { box: "90 219 249 186", art: <><path d="M141 312L177 272 238 310 291 296V366H141z" fill="#cbdae8" /><path d="M141 320L177 296 238 337 291 305V366H141z" fill="#fee4c8" /><path d="M141 342L177 328 238 348 291 333V366H141z" fill="#fff3e4" /></> },
  { box: "360 219 249 186", art: <>{[0, 78].map((d) => <g key={d} transform={`translate(${d} 0)`}><path d="M411 312L428 272 457 312 483 296V366H411z" fill="#cbdae8" /><path d="M411 320L428 296 457 337 483 305V366H411z" fill="#fee4c8" /><path d="M411 344L428 328 457 348 483 335V366H411z" fill="#fff3e4" /></g>)}</> },
  { box: "630 219 249 186", art: <>{rects([[702, 315, 15, 51, "#cbdae8"], [726, 300, 15, 66, "#cbdae8"], [750, 327, 15, 39, "#cbdae8"], [774, 273, 15, 93, "#cbdae8"], [798, 312, 15, 54, "#cbdae8"]])}<path d="M706 304L731 280 757 315 783 290 810 315" fill="none" stroke="#fee1c2" strokeWidth="4" /><g transform="translate(0 207)">{ticks(825)}<path d="M681 58h8M681 76h8M681 94h8M681 112h8M681 130h8M681 148h8" stroke="#eee" strokeWidth="3" /></g></> },
  { box: "90 426 249 186", art: <>{rings([[198, 492, "#fee1c2"], [174, 522, "#fee1c2"], [207, 534, "#fee1c2"], [156, 558, "#fee1c2"], [261, 498, "#fee1c2"]], 10.500, 3.500)}<path d="M225 478h27M238 465v27M213 511h27M226 498v27M258 530h27M271 516v27M171 550h27M184 537v27M225 547h27M238 534v27" stroke="#cde6da" strokeWidth="3" /></> },
  { box: "360 426 249 186", art: rects([[420, 561, 12, 9, "#cde6da"], [435, 546, 12, 24, "#cde6da"], [450, 519, 12, 51, "#cde6da"], [465, 489, 12, 81, "#cde6da"], [480, 477, 12, 93, "#cde6da"], [495, 489, 12, 81, "#cde6da"], [510, 519, 12, 51, "#cde6da"], [525, 546, 12, 24, "#cde6da"], [540, 561, 12, 9, "#cde6da"]]) },
  { box: "630 426 249 186", art: <>{rects([[693, 510, 21, 12, "#9ddcb6"], [693, 522, 21, 24, "#59b08d"], [729, 495, 21, 27, "#9ddcb6"], [729, 522, 21, 15, "#59b08d"], [765, 504, 21, 24, "#9ddcb6"], [765, 528, 21, 24, "#59b08d"], [801, 489, 21, 36, "#9ddcb6"], [801, 525, 21, 15, "#59b08d"]])}<path d="M703.500 487v69M696 487.500h15M696 556.500h15M739.500 481v81M732 481.500h15M732 562.500h15M775.500 478v87M768 478.500h15M768 565.500h15M811.500 472v96M804 472.500h15M804 568.500h15" stroke="#333" strokeWidth="3" /></> },
  { box: "90 633 249 186", art: rects([[144, 675, 27, 24, "#cde6da"], [192, 675, 12, 24, "#fbdcbf"], [207, 675, 12, 24, "#feebd7"], [240, 675, 6, 24, "#fbdcbf"], [258, 675, 24, 24, "#feebd7"], [144, 711, 18, 24, "#e1f2e8"], [165, 711, 9, 24, "#cde6da"], [186, 711, 12, 24, "#cde6da"], [207, 711, 42, 24, "#e1f2e8"], [264, 711, 24, 24, "#fbdcbf"], [144, 750, 6, 24, "#cde6da"], [159, 750, 24, 24, "#feebd7"], [189, 750, 6, 24, "#fbdcbf"], [201, 750, 12, 24, "#e1f2e8"], [231, 750, 21, 24, "#cde6da"], [270, 750, 12, 24, "#feebd7"]]) },
  { box: "360 633 249 186", art: rects([[417, 678, 120, 24, "#f7f7f7"], [537, 678, 18, 24, "#fcfcfc"], [417, 684, 75, 12, "#cde6da"], [501, 678, 3, 24, "#bbb"], [417, 714, 120, 24, "#f7f7f7"], [417, 720, 120, 12, "#cde6da"], [522, 714, 3, 24, "#bbb"], [417, 750, 75, 24, "#f7f7f7"], [492, 750, 63, 24, "#fcfcfc"], [417, 756, 63, 12, "#cde6da"], [540, 750, 3, 24, "#bbb"]]) },
  { box: "630 633 249 186", art: <>{([[718, 745, 29, "#9ddcb6"], [721, 704, 10.500, "#59b08d"], [750, 696, 15, "#59b08d"], [779, 699, 9.500, "#9ddcb6"], [764, 729, 17, "#ffbc7d"], [808, 713, 20, "#ffbc7d"], [792, 744, 11, "#f6912e"], [762, 762, 12.500, "#59b08d"]] as [number, number, number, string][]).map(([x, y, r, c], i) => <circle key={i} cx={x} cy={y} r={r} fill={c} />)}</> },
];

function ShowMe() {
  return (
    <div className="absolute top-[132px] right-0 bottom-0 flex w-[310px] flex-col overflow-hidden">
      <div className="flex h-[54px] shrink-0">
        <div className="w-[156px] shrink-0" />
        <div className="relative z-10 -mb-[3px] flex w-[150px] items-center border-t border-l border-[#dcdcdc] bg-[#fafafa] pb-[11px] pl-[15px] shadow-[3px_-2px_2px_-1px_#aaa]">
          <svg width="14" height="16" viewBox="0 0 14 16">{rects([[0, 0, 11, 3, "#8b729c"], [0, 4, 14, 3, "#83a6cd"], [0, 8, 5, 3, "#f7a57c"], [0, 12, 8, 3, "#fa7480"]])}</svg>
          <div className="ml-[7px] text-[20px] font-light tracking-[0.25px] whitespace-nowrap text-black">Show Me</div>
        </div>
      </div>
      <div className="w-[306px] flex-1 border-t border-l border-[#dcdcdc] bg-[#fafafa] pt-[21px] pl-[20px] shadow-[2px_0_3px_#999]">
        <div className="grid grid-cols-[83px_83px_83px] gap-x-[7px] gap-y-[7px]">
          {THUMBS.map((t, i) => (
            <div key={i} className={`h-[62px] w-[83px] bg-white ${t.on ? "rounded-[2px] outline-3 -outline-offset-2 outline-[#dc6a38]" : "outline-1 -outline-offset-1 outline-[#dedede]"}`}>
              <svg width="83" height="62" viewBox={t.box} className="block">{t.art}</svg>
            </div>
          ))}
        </div>
        <div className="mt-[26px] pl-[1px] text-[18px] leading-[24px] font-light tracking-[0.3px] text-black">For <span className="font-medium">symbol maps</span> try</div>
        <div className="mt-[10px] flex flex-col gap-[12px] pl-[1px] text-[18px] font-light tracking-[0.3px] text-black">
          <div className="flex h-[30px] items-center">1 geo<Globe size={14} className="mr-[5px] ml-[7px] text-[#666]" /><div className="flex h-[30px] w-[126px] items-center rounded-full bg-[#4996b5] pl-[16px] font-normal tracking-[0.65px] text-white">Dimension</div></div>
          <div className="flex h-[30px] items-center whitespace-nowrap">0 or more<div className="ml-[5px] flex h-[30px] w-[136px] items-center rounded-full bg-[#4996b5] pl-[16px] font-normal tracking-[0.65px] text-white">Dimensions</div></div>
          <div className="flex h-[30px] items-center">0 to 2<div className="ml-[6px] flex h-[30px] w-[118px] items-center rounded-full bg-[#00b180] pl-[16px] font-normal tracking-[0.65px] text-white">Measures</div></div>
        </div>
        <div className="mt-[16px] pl-[1px] text-[18px] leading-[23px] font-light tracking-[0.35px] text-[#888]">May use spatial measure in<br />place of geo dimension</div>
      </div>
    </div>
  );
}

/* ---------- footer ---------- */

function SheetTabs() {
  const tab = "flex h-full shrink-0 items-center border-r border-[#c8c8c8] pl-[8px] whitespace-nowrap";
  const add = "flex h-full w-[32px] shrink-0 items-center justify-center border-r border-[#c8c8c8]";
  return (
    <div className="flex h-[46px] shrink-0 border-y border-[#c8c8c8] bg-[#e6e6e6] text-[19px] font-light text-[#444]">
      <div className={`w-[196px] ${tab}`}>
        <svg width="16" height="14" viewBox="0 0 16 14" fill="none" stroke="#666" strokeWidth="1.200" className="-mt-[3px] mr-[4px]"><rect x="5.500" y="1" width="7" height="11" rx="2.500" /><path d="M5.500 4.500h7" /></svg>
        Data Source
      </div>
      <div className={`w-[197px] bg-[#fafafa] font-medium tracking-[0.2px] ${tab}`}>longitude by latitude</div>
      <div className={`w-[300px] tracking-[0.05px] ${tab}`}>aircraft category by total uninjur...</div>
      <div className={`w-[278px] ${tab}`}>injury severity by fatal injuries</div>
      <div className={`w-[86px] tracking-[0.2px] ${tab}`}>Sheet 4</div>
      <div className={add}><svg width="18" height="18" viewBox="0 0 18 18" fill="none" stroke="#666" strokeWidth="1.200"><path d="M9 12H2V2h11v6M5 8v2M7.500 5v5M10 6.500v2" /><path d="M12.500 8.500v8M8.500 12.500h8" strokeWidth="2" /></svg></div>
      <div className={add}><svg width="18" height="18" viewBox="0 0 18 18" fill="none" stroke="#666" strokeWidth="1.200"><path d="M9 12H2V2h11v6M2 7h11M7.500 2v10" /><path d="M12.500 8.500v8M8.500 12.500h8" strokeWidth="2" /></svg></div>
      <div className={add}><svg width="18" height="18" viewBox="0 0 18 18" fill="none" stroke="#666" strokeWidth="1.200"><path d="M7 13l-4-1.500V2L7 3.500 13 2v6M7 3.500V13l2-.7" /><path d="M12.500 8.500v8M8.500 12.500h8" strokeWidth="2" /></svg></div>
    </div>
  );
}

function StatusBar() {
  return (
    <div className="flex h-[21px] shrink-0 overflow-hidden bg-[#ebebeb] pl-[5px] text-[17px] leading-[30px] font-light whitespace-nowrap text-black">
      <div className="w-[127px] tracking-[0.1px]">11866 marks</div>
      <div className="w-[160px] tracking-[-0.1px]">1 row by 1 column</div>
      <div className="tracking-[0.3px]">SUM of AVG(Longitude): 556,279,462</div>
      <div className="mr-[310px] ml-auto flex w-[173px] border-l border-[#c8c8c8]">
        <svg width="12" height="15" viewBox="0 0 12 15" fill="none" stroke="#666" strokeWidth="1.200" className="mt-[7px] ml-[6px]"><circle cx="6" cy="3.500" r="2.500" /><rect x="1.500" y="8" width="9" height="5" rx="2" /></svg>
        <div className="ml-[9px] tracking-[-0.1px]">Ochieng omondi</div>
        <Caret className="mt-[12px] ml-auto text-black" />
      </div>
    </div>
  );
}

export default function App() {
  return (
    <div className={`relative flex h-[999px] w-[1919px] flex-col overflow-hidden bg-[#f4f4f4] ${UI}`}>
      <TitleBar />
      <MenuBar />
      <Banner />
      <Toolbar />
      <div className="flex h-[747px] shrink-0">
        <DataPane />
        <Cards />
        <Workspace />
      </div>
      <SheetTabs />
      <StatusBar />
      <ShowMe />
    </div>
  );
}
